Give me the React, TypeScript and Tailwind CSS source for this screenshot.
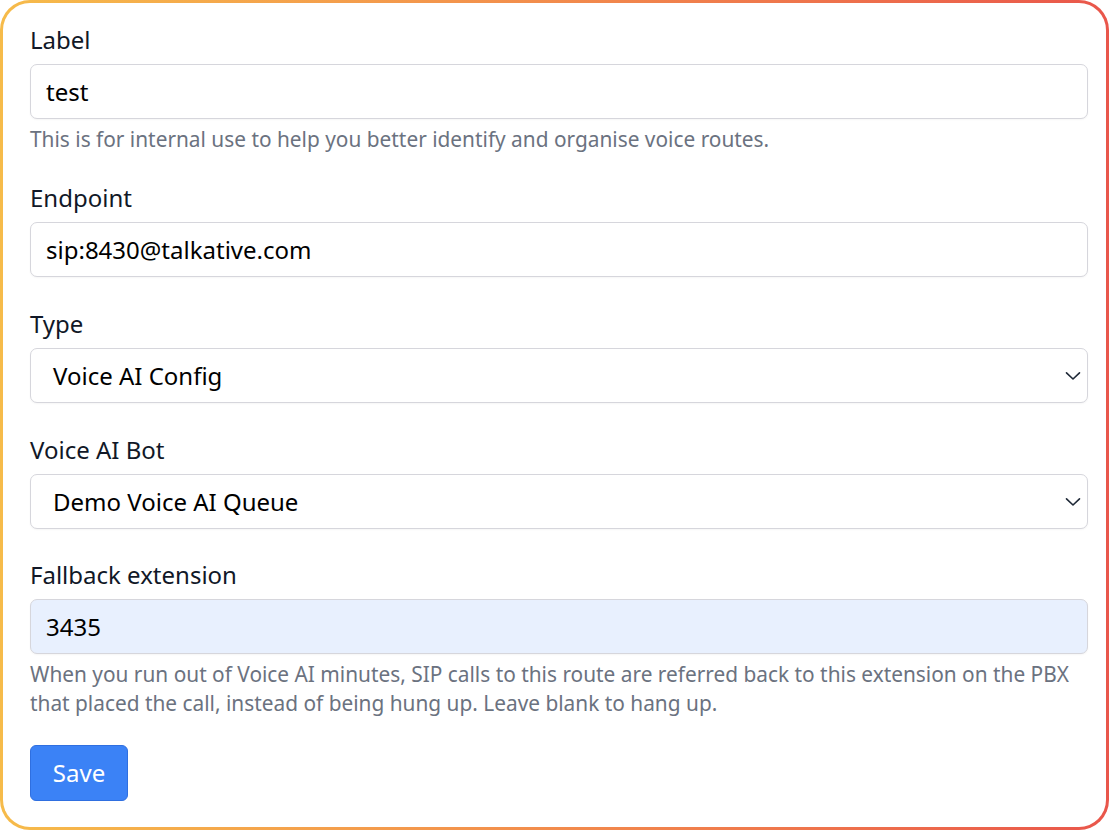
function Chevron() {
  return (
    <svg width="16" height="10" viewBox="0 0 16 10" fill="none" className="absolute right-[6px] top-1/2 -translate-y-1/2">
      <path d="M1.5 1.8L8 8L14.5 1.8" stroke="#1f2937" strokeWidth="1.6" strokeLinecap="round" strokeLinejoin="round" />
    </svg>
  );
}

function Label({ children }: { children: React.ReactNode }) {
  return <label className="block text-[24px] leading-[36px] text-[#111827] mb-[6px]">{children}</label>;
}

function TextInput({ value, autofill }: { value: string; autofill?: boolean }) {
  return (
    <div
      className={`h-[55px] w-full rounded-[7px] border border-[#d6d6dc] px-[15px] flex items-center text-[24px] text-black shadow-[0_1px_2px_rgba(0,0,0,0.04)] ${
        autofill ? "bg-[#e8f0fe]" : "bg-white"
      }`}
    >
      {value}
    </div>
  );
}

function Select({ value }: { value: string }) {
  return (
    <div className="relative h-[55px] w-full rounded-[7px] border border-[#d6d6dc] bg-white pl-[22px] flex items-center text-[24px] text-black shadow-[0_1px_2px_rgba(0,0,0,0.04)]">
      {value}
      <Chevron />
    </div>
  );
}

function Help({ children }: { children: React.ReactNode }) {
  return <p className="mt-[6px] text-[20.85px] leading-[29px] text-[#6b7280]">{children}</p>;
}

export default function App() {
  return (
    <div className="w-[1112px] h-[830px] bg-white font-['Noto_Sans',sans-serif]">
      <div className="w-[1109px] h-[830px] rounded-[30px] bg-gradient-to-r from-[#f6bb4a] to-[#e9564b] p-[3px]">
        <div className="h-full rounded-[27px] bg-white pl-[27px] pr-[18px] pt-[19px]">
          <div>
            <Label>Label</Label>
            <TextInput value="test" />
            <Help>This is for internal use to help you better identify and organise voice routes.</Help>
          </div>

          <div className="mt-[26px]">
            <Label>Endpoint</Label>
            <TextInput value="sip:8430@talkative.com" />
          </div>

          <div className="mt-[29px]">
            <Label>Type</Label>
            <Select value="Voice AI Config" />
          </div>

          <div className="mt-[29px]">
            <Label>Voice AI Bot</Label>
            <Select value="Demo Voice AI Queue" />
          </div>

          <div className="mt-[28px]">
            <Label>Fallback extension</Label>
            <TextInput value="3435" autofill />
            <Help>
              When you run out of Voice AI minutes, SIP calls to this route are referred back to this extension on the PBX
              that placed the call, instead of being hung up. Leave blank to hang up.
            </Help>
          </div>

          <button className="mt-[27px] h-[56px] w-[98px] rounded-[6px] border border-[#2f6fe0] bg-[#3b82f6] text-[24px] text-white">
            Save
          </button>
        </div>
      </div>
    </div>
  );
}
